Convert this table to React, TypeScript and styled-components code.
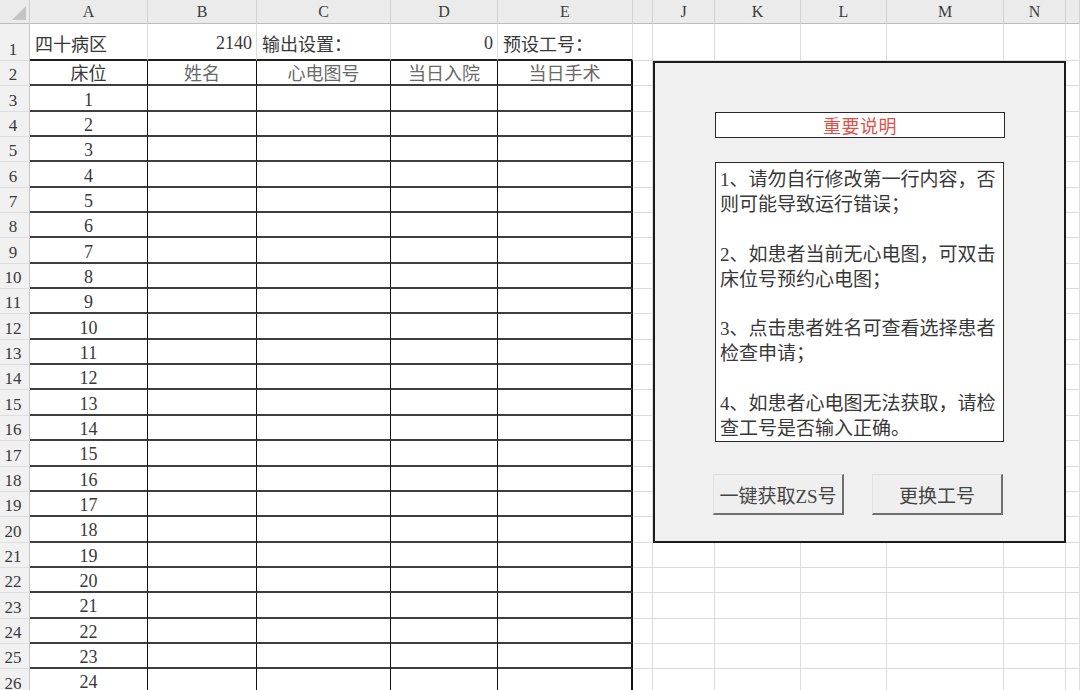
import React from "react";
import styled, { createGlobalStyle } from "styled-components";

const Global = createGlobalStyle`
  html, body { margin: 0; padding: 0; background: #ffffff; }
  body { font-family: "Liberation Serif", "Noto Sans CJK SC", serif; }
  * { box-sizing: border-box; }
`;

const FONT = `"Liberation Serif", "Noto Sans CJK SC", serif`;

const Sheet = styled.div`
  position: relative;
  width: 1080px;
  height: 690px;
  overflow: hidden;
  background: #fff;
`;

const Grid = styled.div`
  display: grid;
  grid-template-columns: 30px 118px 109px 134px 107px 135px 20px 62px 86px 86px 117px 62px 1fr;
  grid-template-rows: 24px 37px repeat(25, 25.35px);
  font-family: ${FONT};
`;

const Corner = styled.div`
  background: #ebebeb;
  border-right: 1px solid #cfcfcf;
  border-bottom: 1px solid #bdbdbd;
  display: flex;
  align-items: flex-end;
  justify-content: flex-end;
  padding: 0 3px 3px 0;
`;

const ColHead = styled.div`
  background: #ebebeb;
  border-right: 1px solid #d2d2d2;
  border-bottom: 1px solid #bdbdbd;
  display: flex;
  align-items: center;
  justify-content: center;
  font-size: 16px;
  color: #3c3c3c;
  padding-top: 1px;
`;

const RowHead = styled.div`
  background: #f1f1f1;
  border-right: 1px solid #c8c8c8;
  border-bottom: 1px solid #dedede;
  display: flex;
  align-items: flex-end;
  justify-content: center;
  padding: 0 3px 0 0;
  font-size: 17px;
  color: #3a3a3a;
  line-height: 20px;
`;

const Cell = styled.div`
  border-right: 1px solid #dcdcdc;
  border-bottom: 1px solid #dcdcdc;
`;

const TopCell = styled.div<{ $align: "left" | "right" }>`
  border-right: 1px solid #dcdcdc;
  border-bottom: 2px solid #1e1e1e;
  display: flex;
  align-items: center;
  justify-content: ${(p) => (p.$align === "right" ? "flex-end" : "flex-start")};
  padding: 3px 4px 0 5px;
  font-size: 18px;
  color: #383838;
  white-space: nowrap;
`;

const TableCell = styled.div<{ $last: boolean; $muted?: boolean }>`
  border-right: ${(p) => (p.$last ? "2px solid #111" : "1px solid #111")};
  border-bottom: 2px solid #3e3e3e;
  display: flex;
  align-items: center;
  justify-content: center;
  padding-top: 3px;
  font-size: 18px;
  line-height: 20px;
  color: ${(p) => (p.$muted ? "#6a6a6a" : "#383838")};
  white-space: nowrap;
`;

const Panel = styled.div`
  position: absolute;
  left: 653px;
  top: 61px;
  width: 413px;
  height: 482px;
  background: #f0f0f0;
  border: 2px solid #1b1b1b;
  padding: 49px 0 0 58px;
  display: flex;
  flex-direction: column;
  align-items: flex-start;
  font-family: ${FONT};
`;

const TitleBox = styled.div`
  margin-left: 2px;
  width: 290px;
  height: 26px;
  background: #fff;
  border: 1.5px solid #2a2a2a;
  display: flex;
  align-items: center;
  justify-content: center;
  color: #e0504a;
  font-size: 18px;
  letter-spacing: 0.5px;
`;

const NoteBox = styled.div`
  margin-left: 2px;
  margin-top: 24px;
  width: 289px;
  height: 280px;
  background: #fff;
  border: 1.5px solid #2a2a2a;
  padding: 5px 0 0 4px;
  font-size: 19px;
  line-height: 24.9px;
  color: #383838;
  overflow: hidden;
`;

const NoteLine = styled.div`
  white-space: nowrap;
  height: 24.9px;
`;

const ButtonRow = styled.div`
  display: flex;
  gap: 28px;
  margin-top: 32px;
`;

const Button = styled.button`
  width: 131px;
  height: 41px;
  background: #efefef;
  border-top: 1px solid #dcdcdc;
  border-left: 1px solid #e4e4e4;
  border-right: 2px solid #6f6f6f;
  border-bottom: 2px solid #6f6f6f;
  font-family: ${FONT};
  font-size: 19px;
  color: #444;
  padding: 0;
  display: flex;
  align-items: center;
  justify-content: center;
  white-space: nowrap;
`;

const columns = ["A", "B", "C", "D", "E", "", "J", "K", "L", "M", "N", ""];

const row1: { text: string; align: "left" | "right" }[] = [
  { text: "四十病区", align: "left" },
  { text: "2140", align: "right" },
  { text: "输出设置：", align: "left" },
  { text: "0", align: "right" },
  { text: "预设工号：", align: "left" },
];

const headers = ["床位", "姓名", "心电图号", "当日入院", "当日手术"];

const notes = [
  "1、请勿自行修改第一行内容，否",
  "则可能导致运行错误；",
  "",
  "2、如患者当前无心电图，可双击",
  "床位号预约心电图；",
  "",
  "3、点击患者姓名可查看选择患者",
  "检查申请；",
  "",
  "4、如患者心电图无法获取，请检",
  "查工号是否输入正确。",
];

export default function App() {
  const cells: React.ReactNode[] = [];
  cells.push(
    <Corner key="corner">
      <svg width="14" height="14" viewBox="0 0 14 14">
        <polygon points="14,0 14,14 0,14" fill="#c4c4c4" />
      </svg>
    </Corner>
  );
  columns.forEach((c, i) => cells.push(<ColHead key={`h${i}`}>{c}</ColHead>));

  for (let r = 1; r <= 26; r++) {
    cells.push(<RowHead key={`r${r}`}>{r}</RowHead>);
    for (let c = 0; c < 12; c++) {
      const k = `c${r}-${c}`;
      if (c < 5 && r === 1) {
        cells.push(
          <TopCell key={k} $align={row1[c].align}>
            {row1[c].text}
          </TopCell>
        );
      } else if (c < 5) {
        let content: React.ReactNode = null;
        if (r === 2) content = headers[c];
        else if (c === 0) content = r - 2;
        cells.push(
          <TableCell key={k} $last={c === 4} $muted={r === 2 && c > 0}>
            {content}
          </TableCell>
        );
      } else {
        cells.push(<Cell key={k} />);
      }
    }
  }

  return (
    <Sheet>
      <Global />
      <Grid>{cells}</Grid>
      <Panel>
        <TitleBox>重要说明</TitleBox>
        <NoteBox>
          {notes.map((n, i) => (
            <NoteLine key={i}>{n}</NoteLine>
          ))}
        </NoteBox>
        <ButtonRow>
          <Button>一键获取ZS号</Button>
          <Button>更换工号</Button>
        </ButtonRow>
      </Panel>
    </Sheet>
  );
}
